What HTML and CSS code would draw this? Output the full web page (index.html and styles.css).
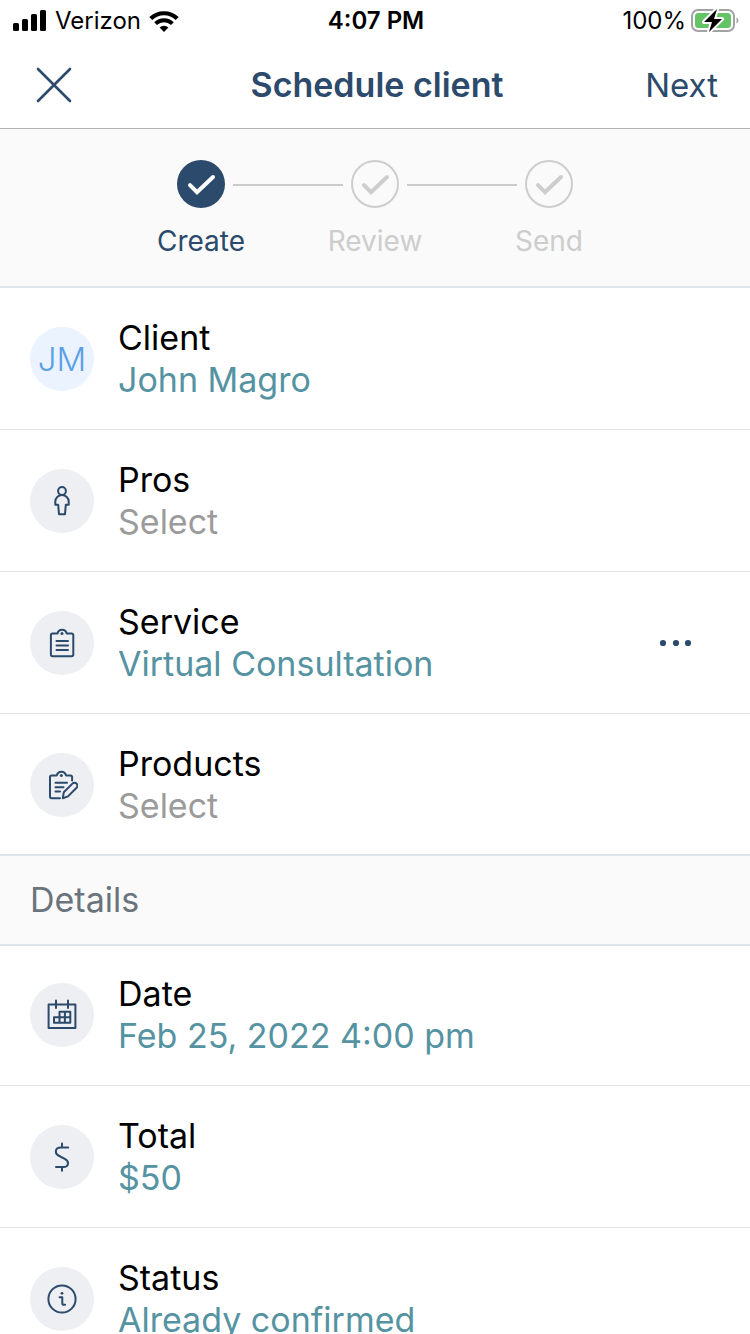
FILE: index.html
```html
<!DOCTYPE html>
<html lang="en">
<head>
<meta charset="utf-8">
<meta name="viewport" content="width=device-width, initial-scale=1">
<title>Schedule client</title>
<link rel="stylesheet" href="styles.css">
</head>
<body>
<div class="app">
  <div class="status-bar">
    <div class="status-left">
      <svg width="34" height="22" viewBox="0 0 34 22" aria-hidden="true"><rect x="0" y="13" width="6" height="8" rx="1.5"/><rect x="9" y="9" width="6" height="12" rx="1.5"/><rect x="18" y="4" width="6" height="17" rx="1.5"/><rect x="27" y="0" width="6" height="21" rx="1.5"/></svg>
      <span>Verizon</span>
      <svg width="30" height="22" viewBox="0 0 30 22" aria-hidden="true"><path d="M1.8 8.6a19 19 0 0 1 26.400 0" fill="none" stroke="#000" stroke-width="4.200"/><path d="M6.600 13.600a12.200 12.200 0 0 1 16.800 0" fill="none" stroke="#000" stroke-width="4"/><path d="M15 22l-4.400-4.400a6.400 6.400 0 0 1 8.800 0z"/></svg>
    </div>
    <div class="status-time">4:07 PM</div>
    <div class="status-right">
      <span>100%</span>
      <svg width="48" height="24" viewBox="0 0 48 24" aria-hidden="true"><rect x="1" y="1" width="42" height="21" rx="6" fill="none" stroke="#a3a3a3" stroke-width="2"/><path d="M45.500 8.500c2.600 1 2.600 5 0 6z" fill="#a3a3a3"/><rect x="4" y="4" width="36" height="15" rx="3.500" fill="#65c466"/><path d="M26 0L13 13h8l-3 10L31 10h-8z" fill="#000" stroke="#fff" stroke-width="4" stroke-linejoin="round" paint-order="stroke"/></svg>
    </div>
  </div>

  <header class="nav">
    <button class="nav-close" type="button" aria-label="Close"><svg width="36" height="36" viewBox="0 0 36 36"><path d="M2 2l32 32M34 2L2 34" fill="none" stroke="currentColor" stroke-width="2.600" stroke-linecap="round"/></svg></button>
    <h1 class="nav-title">Schedule client</h1>
    <button class="nav-next" type="button">Next</button>
  </header>

  <main class="content">
    <ol class="steps">
      <li class="step step-active" aria-current="step">
        <svg class="step-icon" viewBox="0 0 48 48"><circle cx="24" cy="24" r="24" fill="currentColor"/><path d="M13 25.200l7 7L36 17" fill="none" stroke="#fff" stroke-width="4" stroke-linecap="round"/></svg>
        <span>Create</span>
      </li>
      <li class="step">
        <svg class="step-icon" viewBox="0 0 48 48"><circle cx="24" cy="24" r="23" fill="none" stroke="currentColor" stroke-width="2"/><path d="M13 25.200l7 7L36 17" fill="none" stroke="currentColor" stroke-width="4" stroke-linecap="round"/></svg>
        <span>Review</span>
      </li>
      <li class="step">
        <svg class="step-icon" viewBox="0 0 48 48"><circle cx="24" cy="24" r="23" fill="none" stroke="currentColor" stroke-width="2"/><path d="M13 25.200l7 7L36 17" fill="none" stroke="currentColor" stroke-width="4" stroke-linecap="round"/></svg>
        <span>Send</span>
      </li>
    </ol>

    <section class="group">
      <div class="row">
        <button class="row-main" type="button">
          <span class="avatar avatar-initials">JM</span>
          <span class="row-text"><span class="row-label">Client</span><span class="row-value">John Magro</span></span>
        </button>
      </div>
      <div class="row">
        <button class="row-main" type="button">
          <span class="avatar"><svg class="icon" viewBox="0 0 32 32"><circle cx="16" cy="6" r="3.900"/><path d="M13 29.200L12.200 19.800H9.300V16.500a6.700 6.400 0 0 1 13.400 0v3.300h-2.900l-.8 9.400z"/></svg></span>
          <span class="row-text"><span class="row-label">Pros</span><span class="row-value row-empty">Select</span></span>
        </button>
      </div>
      <div class="row">
        <button class="row-main" type="button">
          <span class="avatar"><svg class="icon" viewBox="0 0 32 32"><path d="M11.500 6.500H6.500a1.600 1.600 0 0 0-1.600 1.600v19.500a1.600 1.600 0 0 0 1.600 1.600h19.200a1.600 1.600 0 0 0 1.600-1.600V8.100a1.600 1.600 0 0 0-1.600-1.600h-5a4.700 4.700 0 0 0-9.200 0M10.500 14h11.500M10.500 18.600h11.500M10.500 23h11.500"/><circle class="solid" cx="16" cy="6.500" r="1.500"/></svg></span>
          <span class="row-text"><span class="row-label">Service</span><span class="row-value">Virtual Consultation</span></span>
        </button>
        <button class="row-more" type="button" aria-label="Service options"><svg width="34" height="8" viewBox="0 0 34 8"><circle cx="5" cy="4" r="3.100"/><circle cx="18" cy="4" r="3.100"/><circle cx="30" cy="4" r="3.100"/></svg></button>
      </div>
      <div class="row">
        <button class="row-main" type="button">
          <span class="avatar"><svg class="icon" viewBox="0 0 32 32"><path d="M14 29.200H5.600a1.600 1.600 0 0 1-1.600-1.600V8a1.600 1.600 0 0 1 1.600-1.600h5.200a4.700 4.700 0 0 1 9.200 0h4.500a1.600 1.600 0 0 1 1.600 1.600v3.500M9.500 13.800h11.500M9.500 18.200h8M9.500 22.600h4.500"/><path d="M16.800 29.200l1-6 8.600-8.600a2.900 2.900 0 0 1 4.200 4.200l-8.600 8.600z"/><circle class="solid" cx="15.400" cy="6.400" r="1.500"/></svg></span>
          <span class="row-text"><span class="row-label">Products</span><span class="row-value row-empty">Select</span></span>
        </button>
      </div>
    </section>

    <section class="group">
      <h2 class="group-title">Details</h2>
      <div class="row">
        <button class="row-main" type="button">
          <span class="avatar"><svg class="icon" viewBox="0 0 32 32"><path d="M2.600 5.500h26.800v23.600H2.600zM10 1.500v7.500M22 1.500v7.500M13.500 12.700h10.800v11H8v-5.500h16.300M13.500 12.700v11M18.900 12.700v11"/></svg></span>
          <span class="row-text"><span class="row-label">Date</span><span class="row-value">Feb 25, 2022 4:00 pm</span></span>
        </button>
      </div>
      <div class="row">
        <button class="row-main" type="button">
          <span class="avatar"><svg class="icon" viewBox="0 0 32 32"><path d="M22.200 6.500h-7.400c-6 0-6.200 6-2.400 8l6.800 3.600c4.600 2.800 3.200 8-1.600 8H10M16 2.500v4M16 26v3.800"/></svg></span>
          <span class="row-text"><span class="row-label">Total</span><span class="row-value">$50</span></span>
        </button>
      </div>
      <div class="row">
        <button class="row-main" type="button">
          <span class="avatar"><svg class="icon" viewBox="0 0 32 32"><circle cx="16" cy="16" r="13.600"/><path d="M13.600 14.200h2.700v6q0 1.600 1.500 1.600h1.300"/><circle class="solid" cx="16" cy="10.300" r="1.400"/></svg></span>
          <span class="row-text"><span class="row-label">Status</span><span class="row-value">Already confirmed</span></span>
        </button>
      </div>
    </section>
  </main>
</div>
</body>
</html>
```
FILE: styles.css
```css
* {
  box-sizing: border-box;
}

body {
  margin: 0;
  background: #fff;
  color: #000;
  font-family: Inter, "Liberation Sans", sans-serif;
}

button {
  margin: 0;
  padding: 0;
  border: 0;
  background: none;
  color: inherit;
  font: inherit;
  text-align: left;
  cursor: pointer;
}

svg {
  display: block;
  flex: none;
}

.app {
  display: flex;
  flex-direction: column;
  height: 100vh;
}

.status-bar,
.nav {
  display: grid;
  grid-template-columns: 1fr auto 1fr;
  align-items: center;
  flex: none;
}

.status-bar {
  padding: 0 11px 0 13px;
  font-size: 24px;
  line-height: 41px;
}

.status-left,
.status-right {
  display: flex;
  align-items: center;
  gap: 8px;
}

.status-right {
  justify-content: flex-end;
  gap: 5px;
}

.status-time {
  font-weight: 600;
}

.nav {
  padding: 22px 32px 21px 36px;
  border-bottom: 1px solid #b2b2b2;
  color: #2c4a6b;
  font-size: 33px;
  line-height: 44px;
}

.nav-title {
  margin: 0;
  font-size: 34px;
  font-weight: 600;
}

.nav-next {
  justify-self: end;
}

.content {
  flex: 1;
  min-height: 0;
  overflow-y: auto;
  scrollbar-width: none;
}

.steps {
  display: flex;
  justify-content: center;
  margin: 0;
  padding: 31px 0 27px;
  border-bottom: 2px solid #dfe5e8;
  background: #fafafa;
  list-style: none;
}

.step {
  position: relative;
  display: flex;
  flex-direction: column;
  align-items: center;
  gap: 15px;
  width: 174px;
  color: #cdcdcd;
  font-size: 28px;
  line-height: 36px;
}

.step-active {
  color: #2c4a6b;
}

.step-icon {
  width: 48px;
  height: 48px;
}

/* Connector between neighbouring step circles */
.step + .step::before {
  content: "";
  position: absolute;
  top: 24px;
  right: 119px;
  width: 110px;
  height: 2px;
  background: #cbcbcb;
}

.row {
  display: flex;
  align-items: center;
  border-bottom: 1px solid #e4e4e6;
}

.row-main {
  display: flex;
  flex: 1;
  align-items: center;
  gap: 24px;
  min-width: 0;
  padding: 29px 30px 28px;
}

.group:first-of-type .row:last-child {
  border-bottom: 2px solid #dfe5e8;
}

.group:first-of-type .row:last-child .row-main {
  padding-bottom: 27px;
}

.avatar {
  display: flex;
  flex: none;
  align-items: center;
  justify-content: center;
  width: 64px;
  height: 64px;
  border-radius: 50%;
  background: #eeeff3;
}

.avatar-initials {
  background: #eaf3ff;
  color: #5b9fe6;
  font-size: 33px;
  font-weight: 300;
}

.icon {
  width: 32px;
  height: 32px;
  fill: none;
  stroke: #2c4a6b;
  stroke-width: 2;
  stroke-linejoin: round;
  stroke-linecap: round;
}

.solid {
  fill: #2c4a6b;
  stroke: none;
}

.row-text {
  display: flex;
  flex-direction: column;
  min-width: 0;
  font-size: 34px;
  line-height: 42px;
}

.row-value {
  color: #5593a2;
}

.row-empty {
  color: #9b9b9b;
}

.row-more {
  padding: 24px 58px 24px 24px;
  fill: #2c4a6b;
}

.group-title {
  margin: 0;
  padding: 22px 30px;
  border-bottom: 2px solid #dfe5e8;
  background: #fafafa;
  color: #6a747c;
  font-size: 34px;
  font-weight: 400;
  line-height: 44px;
}

.group-title + .row .row-main {
  padding-top: 27px;
}
```
